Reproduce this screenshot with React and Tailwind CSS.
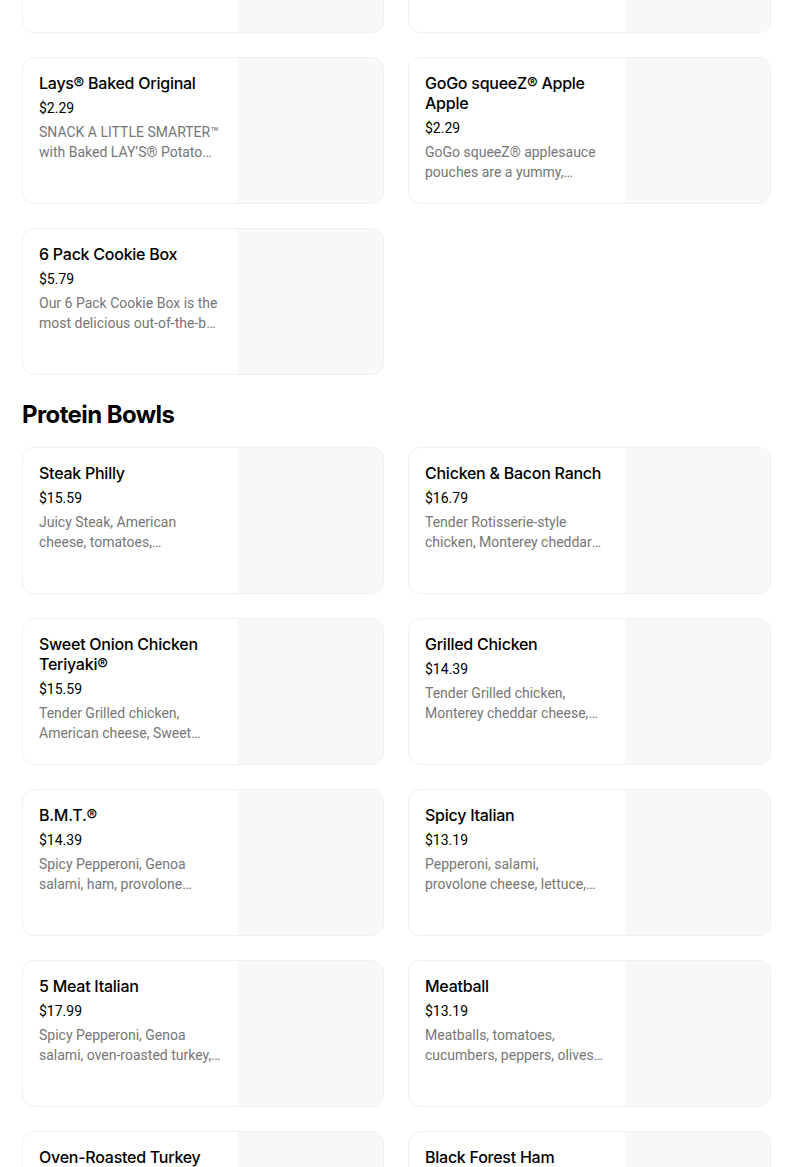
import React from "react";

const snacks = [
  { name: "", price: "", desc: "" },
  { name: "", price: "", desc: "" },
  {
    name: "Lays® Baked Original",
    price: "$2.29",
    desc: "SNACK A LITTLE SMARTER™ with Baked LAY’S® Potato Crisps, made with simple ingredients and baked to crispy perfection.",
  },
  {
    name: "GoGo squeeZ® Apple Apple",
    price: "$2.29",
    desc: "GoGo squeeZ® applesauce pouches are a yummy, convenient snack made with simple ingredients.",
  },
  {
    name: "6 Pack Cookie Box",
    price: "$5.79",
    desc: "Our 6 Pack Cookie Box is the most delicious out-of-the-box treat for sharing with friends.",
  },
];

const bowls = [
  {
    name: "Steak Philly",
    price: "$15.59",
    desc: "Juicy Steak, American cheese, tomatoes, cucumbers, green peppers and red onions.",
  },
  {
    name: "Chicken & Bacon Ranch",
    price: "$16.79",
    desc: "Tender Rotisserie-style chicken, Monterey cheddar cheese, crispy bacon and peppercorn ranch.",
  },
  {
    name: "Sweet Onion Chicken Teriyaki®",
    price: "$15.59",
    desc: "Tender Grilled chicken, American cheese, Sweet Onion Teriyaki sauce and crisp veggies.",
  },
  {
    name: "Grilled Chicken",
    price: "$14.39",
    desc: "Tender Grilled chicken, Monterey cheddar cheese, lettuce, tomatoes and cucumbers.",
  },
  {
    name: "B.M.T.®",
    price: "$14.39",
    desc: "Spicy Pepperoni, Genoa salami, ham, provolone cheese, lettuce, tomatoes and onions.",
  },
  {
    name: "Spicy Italian",
    price: "$13.19",
    desc: "Pepperoni, salami, provolone\u00a0cheese, lettuce, tomatoes, cucumbers and onions.",
  },
  {
    name: "5 Meat Italian",
    price: "$17.99",
    desc: "Spicy Pepperoni, Genoa salami, oven-roasted turkey, ham, bacon and provolone cheese.",
  },
  {
    name: "Meatball",
    price: "$13.19",
    desc: "Meatballs, tomatoes, cucumbers, peppers, olives and Parmesan cheese.",
  },
  {
    name: "Oven-Roasted Turkey",
    price: "$13.19",
    desc: "Oven-roasted turkey, American cheese, lettuce, tomatoes and cucumbers.",
  },
  {
    name: "Black Forest Ham",
    price: "$12.59",
    desc: "Black Forest ham, American cheese, lettuce, tomatoes and cucumbers.",
  },
];

function ItemCard({ item }) {
  return (
    <div className="flex h-[147px] overflow-hidden rounded-xl border border-[#f0f0f0] bg-white">
      <div className="flex min-w-0 flex-1 flex-col pt-[15px] pl-4 pr-4">
        <div className="text-[16px] leading-5 font-medium tracking-[-0.25px] text-black">
          {item.name}
        </div>
        <div className="mt-[5px] font-['Roboto',sans-serif] text-[14px] leading-5 text-black">
          {item.price}
        </div>
        <div className="mt-1 line-clamp-2 font-['Roboto',sans-serif] text-[14px] leading-5 text-[#767676]">
          {item.desc}
        </div>
      </div>
      <div className="h-full w-[145px] shrink-0 bg-[#f8f8f8]" />
    </div>
  );
}

function App() {
  return (
    <div
      className="h-[1167px] overflow-hidden bg-white px-[22px]"
      style={{ fontFamily: "Inter, 'Noto Sans', sans-serif" }}>
      <div className="-mt-[114px] grid grid-cols-[362px_363px] gap-6">
        {snacks.map((s, i) => (
          <ItemCard key={i} item={s} />
        ))}
      </div>
      <h2 className="mt-6 mb-4 text-[24px] leading-8 font-bold tracking-[-0.6px] text-black">
        Protein Bowls
      </h2>
      <div className="grid grid-cols-[362px_363px] gap-6">
        {bowls.map((b) => (
          <ItemCard key={b.name} item={b} />
        ))}
      </div>
    </div>
  );
}

export default App;
